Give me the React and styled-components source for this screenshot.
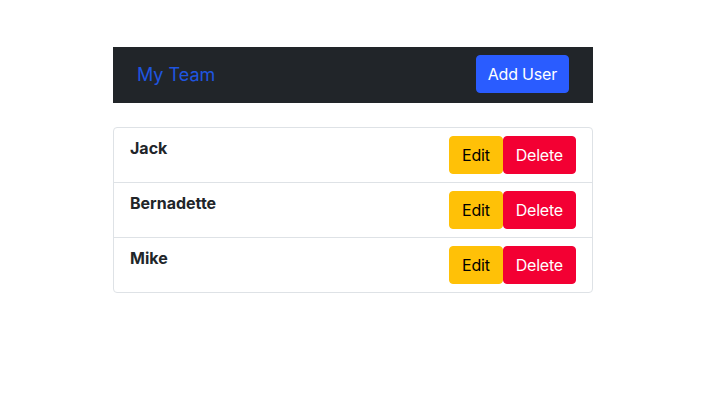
import React from "react";
import styled, { createGlobalStyle } from "styled-components";

const Global = createGlobalStyle`
  html, body { margin: 0; padding: 0; background: #fff; }
  body {
    font-family: Inter, "Liberation Sans", "Noto Sans", sans-serif;
    color: #212529;
    font-size: 16px;
    line-height: 1.5;
  }
  * { box-sizing: border-box; }
`;

const Wrapper = styled.div`
  width: 480px;
  margin: 47px 0 0 113px;
`;

const Navbar = styled.nav`
  height: 56px;
  background: #212529;
  display: flex;
  align-items: flex-start;
  justify-content: space-between;
  padding: 8px 24px 0 24px;
`;

const Brand = styled.span`
  color: #1f55e0;
  font-size: 18px;
  line-height: 38px;
  margin-top: 1px;
`;

const Button = styled.button`
  font-family: inherit;
  font-size: 16px;
  line-height: 24px;
  letter-spacing: -0.2px;
  height: 38px;
  padding: 6px ${(p) => p.$px || 12}px;
  border: 1px solid ${(p) => p.$bg};
  background: ${(p) => p.$bg};
  color: ${(p) => p.$fg};
  border-radius: 4px;
  cursor: pointer;
`;

const List = styled.ul`
  list-style: none;
  margin: 24px 0 0 0;
  padding: 0;
  border: 1px solid #dee2e6;
  border-radius: 4px;
`;

const Row = styled.li`
  display: flex;
  justify-content: space-between;
  align-items: flex-start;
  padding: 8px 16px;
  & + & { border-top: 1px solid #dee2e6; }
`;

const Name = styled.span`
  font-weight: 700;
  font-size: 16px;
  line-height: 24px;
`;

const Actions = styled.div`
  display: flex;
`;

const users = ["Jack", "Bernadette", "Mike"];

export default function App() {
  return (
    <>
      <Global />
      <Wrapper>
        <Navbar>
          <Brand>My Team</Brand>
          <Button $bg="#2a5cff" $fg="#fff" $px={11}>Add User</Button>
        </Navbar>
        <List>
          {users.map((u) => (
            <Row key={u}>
              <Name>{u}</Name>
              <Actions>
                <Button $bg="#ffc107" $fg="#000">Edit</Button>
                <Button $bg="#f30033" $fg="#fff">Delete</Button>
              </Actions>
            </Row>
          ))}
        </List>
      </Wrapper>
    </>
  );
}
